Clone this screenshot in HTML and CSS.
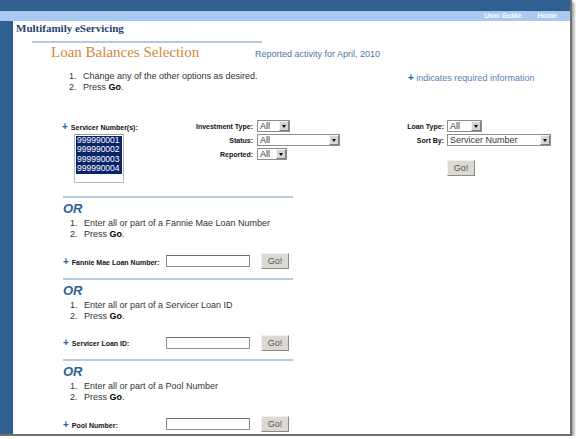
FILE: index.html
```html
<!DOCTYPE html>
<html>
<head>
<meta charset="utf-8">
<title>Loan Balances Selection</title>
<link rel="stylesheet" href="styles.css">
</head>
<body>
<div class="frame">
  <div class="topbar"></div>
  <div class="navbar"><a href="#">User Guide</a><a href="#">Home</a></div>
  <div class="main">
    <div class="stripe"></div>
    <div class="content">
      <div class="brand">Multifamily eServicing</div>
      <div class="head-rule"></div>
      <div class="head">
        <h1 class="title">Loan Balances Selection</h1>
        <span class="reported">Reported activity for April, 2010</span>
      </div>
      <div class="intro">
        <ol class="steps steps-top">
          <li>Change any of the other options as desired.</li>
          <li>Press <b>Go</b>.</li>
        </ol>
        <div class="note"><span class="plus">+</span> indicates required information</div>
      </div>

      <div class="filters">
        <div class="flabel-a"><span class="plus">+</span>Servicer Number(s):</div>
        <div class="listcell">
          <div class="listbox">
            <div class="opt">999990001</div>
            <div class="opt">999990002</div>
            <div class="opt">999990003</div>
            <div class="opt">999990004</div>
          </div>
        </div>

        <div class="flabel r1 cb">Investment Type:</div>
        <div class="fctrl r1 cb"><span class="select sel-it"><span class="val">All</span><span class="arrow"></span></span></div>
        <div class="flabel r2 cb">Status:</div>
        <div class="fctrl r2 cb"><span class="select sel-status"><span class="val">All</span><span class="arrow"></span></span></div>
        <div class="flabel r3 cb">Reported:</div>
        <div class="fctrl r3 cb"><span class="select sel-rep"><span class="val">All</span><span class="arrow"></span></span></div>

        <div class="flabel r1 cc">Loan Type:</div>
        <div class="fctrl r1 cc"><span class="select sel-lt"><span class="val">All</span><span class="arrow"></span></span></div>
        <div class="flabel r2 cc">Sort By:</div>
        <div class="fctrl r2 cc"><span class="select sel-sort"><span class="val">Servicer Number</span><span class="arrow"></span></span></div>
        <div class="fctrl r4 cc"><button class="go go-filter">Go!</button></div>
      </div>

      <section class="alt">
        <div class="rule"></div>
        <div class="or">OR</div>
        <ol class="steps">
          <li>Enter all or part of a Fannie Mae Loan Number</li>
          <li>Press <b>Go</b>.</li>
        </ol>
        <div class="search-row">
          <label class="slabel"><span class="plus">+</span>Fannie Mae Loan Number:</label>
          <span class="textbox"></span>
          <button class="go">Go!</button>
        </div>
      </section>

      <section class="alt">
        <div class="rule"></div>
        <div class="or">OR</div>
        <ol class="steps">
          <li>Enter all or part of a Servicer Loan ID</li>
          <li>Press <b>Go</b>.</li>
        </ol>
        <div class="search-row">
          <label class="slabel"><span class="plus">+</span>Servicer Loan ID:</label>
          <span class="textbox"></span>
          <button class="go">Go!</button>
        </div>
      </section>

      <section class="alt">
        <div class="rule"></div>
        <div class="or">OR</div>
        <ol class="steps">
          <li>Enter all or part of a Pool Number</li>
          <li>Press <b>Go</b>.</li>
        </ol>
        <div class="search-row">
          <label class="slabel"><span class="plus">+</span>Pool Number:</label>
          <span class="textbox"></span>
          <button class="go">Go!</button>
        </div>
      </section>
    </div>
  </div>
</div>
</body>
</html>
```
FILE: styles.css
```css
* { box-sizing: border-box; margin: 0; padding: 0; }
html, body { background: #fff; }
body {
  margin: 0;
  font-family: "Liberation Sans", Arial, sans-serif;
  font-size: 9px;
  color: #333;
}

.frame {
  width: 572px;
  height: 436px;
  overflow: hidden;
  display: flex;
  flex-direction: column;
  background: #fff;
  border-right: 2px solid #707070;
  border-bottom: 2px solid #707070;
  box-shadow: 2px 2px 3px rgba(0, 0, 0, 0.4);
}

.topbar { height: 11px; background: #30608f; flex: none; }
.navbar {
  height: 10px;
  background: #a9c9f3;
  flex: none;
  display: flex;
  justify-content: flex-end;
  align-items: center;
  gap: 16px;
  padding-right: 13px;
}
.navbar a {
  color: #fff;
  font-weight: bold;
  font-size: 7px;
  text-decoration: none;
  line-height: 10px;
}

.main { flex: 1; display: flex; min-height: 0; }
.stripe { width: 13px; background: #30608f; flex: none; }
.content { flex: 1; }

.brand {
  height: 13px;
  line-height: 14px;
  padding-left: 3px;
  font-family: "Liberation Serif", "Times New Roman", serif;
  font-weight: bold;
  font-size: 11px;
  color: #24446f;
}

.head-rule {
  margin: 7px 0 0 19px;
  width: 230px;
  height: 2px;
  background: #b3c8e2;
}

.head {
  display: flex;
  align-items: baseline;
  height: 18px;
}
.title {
  width: 204px;
  margin-left: 38px;
  font-family: "Liberation Serif", "Times New Roman", serif;
  font-weight: normal;
  font-size: 15px;
  line-height: 18px;
  color: #d3873a;
}
.reported { color: #4d75a8; font-size: 9px; }

.intro { display: flex; margin-top: 9.5px; }
.steps { list-style: none; line-height: 11px; color: #333; }
.steps li::before {
  content: counter(list-item) ".";
  display: inline-block;
  width: 14px;
}
.steps b { color: #000; }
.steps-top { margin-left: 56px; width: 339px; }
.note { margin-top: 2px; color: #5a80b2; line-height: 11px; }
.plus { color: #2b5d9a; font-weight: bold; font-size: 10px; line-height: 9px; margin-right: 3px; }
.note .plus { margin-right: 0; }

.filters {
  margin: 26.5px 0 0 49px;
  display: grid;
  grid-template-columns: 98px 93px 147px 44px 113px;
  grid-template-rows: repeat(5, 14px);
  align-items: center;
}
.flabel-a { grid-column: 1; grid-row: 1; font-weight: bold; font-size: 7px; color: #111; }
.listcell { grid-column: 1; grid-row: 2 / span 4; align-self: start; padding: 1px 0 0 12px; }
.listbox {
  width: 50px;
  height: 49px;
  border: 1px solid #b9b9b9;
  border-top-color: #9a9a9a;
  padding: 1px;
  background: #fff;
}
.opt {
  height: 9.4px;
  line-height: 9.4px;
  padding-left: 1px;
  background: #0a246a;
  color: #fff;
  font-size: 8.5px;
  white-space: nowrap;
  overflow: hidden;
}

.flabel { font-weight: bold; font-size: 7px; color: #111; text-align: right; }
.fctrl { display: flex; }
.cb.flabel { grid-column: 2; }
.cb.fctrl { grid-column: 3; padding-left: 4px; }
.cc.flabel { grid-column: 4; }
.cc.fctrl { grid-column: 5; padding-left: 3px; }
.r1 { grid-row: 1; }
.r2 { grid-row: 2; }
.r3 { grid-row: 3; }
.r4 { grid-row: 4; align-self: start; }

.select {
  display: flex;
  align-items: center;
  height: 12px;
  border: 1px solid #8e8e8e;
  background: #fff;
}
.select .val { flex: 1; padding-left: 2px; line-height: 10px; font-size: 9px; color: #333; white-space: nowrap; }
.select .arrow {
  width: 10px;
  height: 10px;
  background: #d8d5ce;
  border: 1px solid;
  border-color: #f4f4f4 #7d7d7d #7d7d7d #f4f4f4;
  display: flex;
  align-items: center;
  justify-content: center;
}
.select .arrow::after {
  content: "";
  border-left: 2.5px solid transparent;
  border-right: 2.5px solid transparent;
  border-top: 3px solid #000;
}
.sel-it { width: 33px; }
.sel-status { width: 83px; }
.sel-rep { width: 30px; }
.sel-lt { width: 35px; }
.sel-sort { width: 104px; }

.go {
  width: 28px;
  height: 16px;
  background: #dcd9d3;
  border: 1px solid;
  border-color: #f0f0f0 #8a8a8a #8a8a8a #f0f0f0;
  font-family: "Liberation Sans", Arial, sans-serif;
  font-size: 9px;
  color: #555;
  display: flex;
  align-items: center;
  justify-content: center;
}
.go-filter { margin-top: -1px; }

.alt { margin-left: 50px; }
.filters + .alt { margin-top: 7px; }
.rule { width: 230px; height: 2px; background: #b7cbe3; }
.or {
  height: 20px;
  line-height: 21px;
  font-size: 13px;
  font-style: italic;
  font-weight: bold;
  color: #2e6196;
}
.alt .steps { margin-left: 7px; }
.search-row {
  display: flex;
  align-items: center;
  height: 16px;
  margin: 13px 0 8.5px 0;
}
.slabel { width: 103px; font-weight: bold; font-size: 7px; color: #111; }
.textbox {
  width: 84px;
  height: 12px;
  border: 1px solid #8e8e8e;
  border-top-color: #6f6f6f;
  background: #fff;
}
.search-row .go { margin-left: 11px; }
```
